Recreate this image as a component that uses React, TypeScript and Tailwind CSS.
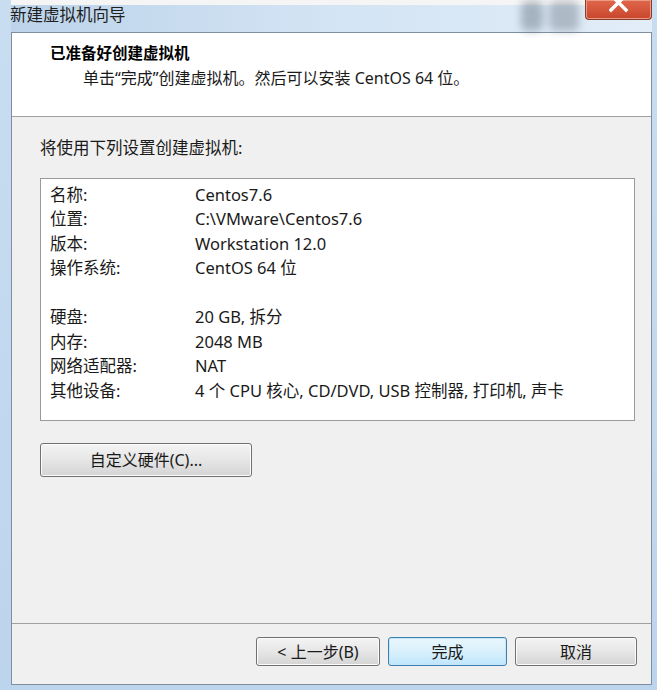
import React from "react";

const rows: [string, string][] = [
  ["名称:", "Centos7.6"],
  ["位置:", "C:\\VMware\\Centos7.6"],
  ["版本:", "Workstation 12.0"],
  ["操作系统:", "CentOS 64 位"],
  ["", ""],
  ["硬盘:", "20 GB, 拆分"],
  ["内存:", "2048 MB"],
  ["网络适配器:", "NAT"],
  ["其他设备:", "4 个 CPU 核心, CD/DVD, USB 控制器, 打印机, 声卡"],
];

function WinButton({
  children,
  className = "",
  primary = false,
}: {
  children: React.ReactNode;
  className?: string;
  primary?: boolean;
}) {
  return (
    <button
      className={`flex items-center justify-center rounded-[3px] border text-[16px] text-[#1a1a1a] ${
        primary
          ? "border-[#3c7fb1] bg-gradient-to-b from-[#eaf6fd] via-[#d9f0fc] to-[#bee6fd] shadow-[inset_0_0_0_1px_#c6e6f8]"
          : "border-[#707070] bg-gradient-to-b from-[#f4f4f4] via-[#e6e6e6] to-[#d4d4d4] shadow-[inset_0_0_0_1px_#fcfcfc]"
      } ${className}`}
    >
      {children}
    </button>
  );
}

export default function App() {
  return (
    <div
      className="relative h-[694px] w-[668px] overflow-hidden bg-white"
      style={{ fontFamily: '"Noto Sans", "Noto Sans CJK SC", sans-serif' }}
    >
      <div className="flex h-[690px] w-[657px] flex-col bg-gradient-to-b from-[#c9ddf1] to-[#bcd4ec] pb-[5px] pl-[11px] pr-[5px]">
        {/* title bar */}
        <div className="flex h-[32px] items-start justify-between border-t-[5px] border-[#f5f5f5] bg-gradient-to-r from-[#bcd3ea] via-[#d3e4f4] to-[#e2edf8]">
          <span className="-ml-[1px] text-[16.5px] leading-[20px] text-[#1e1e1e]">
            新建虚拟机向导
          </span>
          <div className="flex items-start">
            {/* blurred window behind the glass */}
            <div className="mr-[6px] -mt-[4px] flex gap-[6px] opacity-50 blur-[4px]">
              <div className="h-[30px] w-[22px] rounded-[6px] bg-[#6f7c88]" />
              <div className="h-[30px] w-[30px] rounded-[6px] bg-[#7d8995]" />
            </div>
            <div className="-mt-[5px] flex h-[20px] w-[67px] items-start justify-center overflow-hidden rounded-b-[4px] border border-t-0 border-[#8a3a2a] bg-gradient-to-b from-[#e0674c] to-[#c8452a] shadow-[inset_0_0_0_1px_#eb9a86]">
              <svg width="20" height="16" viewBox="0 0 20 16">
                <path
                  d="M2 -5 L17 10 M17 -5 L2 10"
                  stroke="#ffffff"
                  strokeWidth="3.4"
                  strokeLinecap="square"
                  fill="none"
                />
              </svg>
            </div>
          </div>
        </div>

        {/* client area */}
        <div className="flex flex-1 flex-col border border-[#7f8fa0] bg-[#f0f0f0]">
          <div className="flex h-[84px] flex-col border-b border-[#a0a0a0] bg-white pl-[38px] pt-[10px]">
            <div className="text-[15.5px] font-bold leading-[20px] text-black">
              已准备好创建虚拟机
            </div>
            <div className="pl-[33px] pt-[5px] text-[16px] leading-[20px] text-[#1a1a1a]">
              单击“完成”创建虚拟机。然后可以安装 CentOS 64 位。
            </div>
          </div>

          <div className="flex flex-1 flex-col border-b border-[#a0a0a0] pl-[28px]">
            <div className="pt-[21px] text-[16.5px] leading-[20px] text-[#1a1a1a]">
              将使用下列设置创建虚拟机:
            </div>
            <div className="mt-[20px] h-[243px] w-[595px] border border-[#9a9a9a] bg-white pl-[9px] pt-[4px]">
              {rows.map(([k, v], i) => (
                <div
                  key={i}
                  className="flex h-[24.5px] items-center text-[16.5px] text-[#1a1a1a]"
                >
                  <span className="w-[145px]">{k}</span>
                  <span>{v}</span>
                </div>
              ))}
            </div>
            <WinButton className="mt-[22px] h-[34px] w-[212px]">自定义硬件(C)...</WinButton>
          </div>

          <div className="flex h-[60px] items-start justify-end gap-[8px] pr-[14px] pt-[13px]">
            <WinButton className="h-[29px] w-[124px]">&lt; 上一步(B)</WinButton>
            <WinButton primary className="h-[29px] w-[119px]">
              完成
            </WinButton>
            <WinButton className="h-[29px] w-[122px]">取消</WinButton>
          </div>
        </div>
      </div>
    </div>
  );
}
